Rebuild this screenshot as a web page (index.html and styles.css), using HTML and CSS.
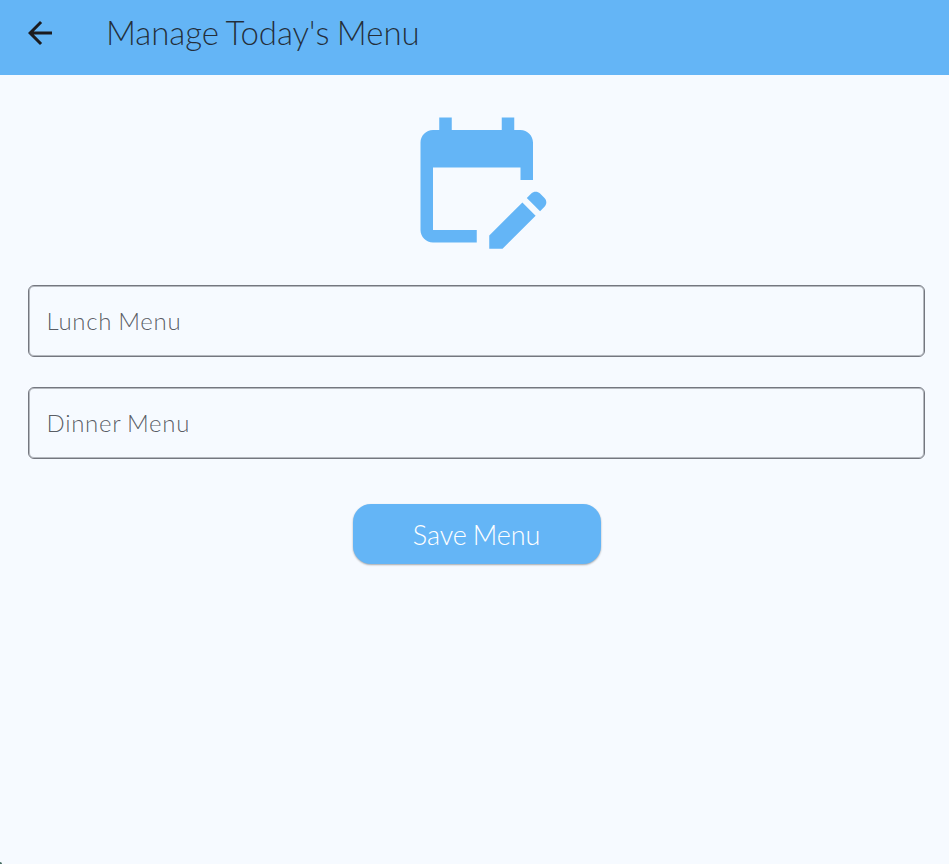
FILE: index.html
```html
<!DOCTYPE html>
<html lang="en">
<head>
<meta charset="utf-8">
<title>Manage Today's Menu</title>
<link rel="stylesheet" href="styles.css">
</head>
<body>
<header class="app-bar">
  <button class="back" aria-label="Back"><svg viewBox="4 4 16 16"><path d="M20 11H7.830l5.590-5.590L12 4l-8 8 8 8 1.410-1.410L7.830 13H20v-2z"/></svg></button>
  <h1 class="title">Manage Today's Menu</h1>
</header>
<main class="content">
  <svg class="calendar" viewBox="0.040 0 24 24"><path d="M12 22H5c-1.110 0-2-.9-2-2V6c0-1.100.890-2 2-2h1V2h2v2h8V2h2v2h1c1.100 0 2 .9 2 2v6h-2v-2H5v10h7v2zM22.130 16.990l.710-.710c.390-.390.390-1.020 0-1.410l-.710-.710c-.390-.390-1.020-.390-1.410 0l-.710.710 2.120 2.120zM21.420 17.700l-5.300 5.300H14v-2.120l5.300-5.300 2.120 2.120z"/></svg>
  <div class="field lunch">Lunch Menu</div>
  <div class="field dinner">Dinner Menu</div>
  <button class="save">Save Menu</button>
</main>
<span class="corner"></span>
</body>
</html>
```
FILE: styles.css
```css
* { box-sizing: border-box; }
body {
  margin: 0;
  min-height: 864px;
  background: #f6faff;
  font-family: Lato, sans-serif;
  font-weight: 300;
}
button { border: 0; font: inherit; }
.app-bar {
  display: flex;
  height: 75px;
  padding: 12px 27px 0 28px;
  background: #64b5f6;
}
.back {
  width: 24px;
  height: 24px;
  margin: 9px 54px 0 0;
  padding: 0;
  background: none;
}
.back svg { display: block; fill: #1b1b1f; }
.title {
  margin: 0;
  color: #1b1b1fe0;
  font-size: 33px;
  font-weight: 300;
  line-height: 41px;
  letter-spacing: -.05px;
  word-spacing: -1.400px;
}
.content {
  display: flex;
  flex-direction: column;
  padding: 30px 24px 0 28px;
}
.calendar {
  align-self: center;
  width: 150px;
  height: 150px;
  fill: #64b5f6;
}
.field {
  height: 72px;
  margin-top: 30px;
  padding: 0 17.500px;
  border: 1px solid #74777f;
  border-radius: 6px;
  box-shadow: inset 0 0 0 1px #74777f80;
  color: #44474ee0;
  font-size: 24px;
  line-height: 70px;
  letter-spacing: .7px;
  word-spacing: -1.200px;
}
.save {
  align-self: center;
  width: 248px;
  height: 60px;
  margin-top: 45px;
  padding: 0;
  border-radius: 18px;
  background: #64b5f6;
  box-shadow: 0 1px 2px #0005;
  color: #fff;
  font-size: 27px;
  letter-spacing: -.1px;
  word-spacing: -1.200px;
}
.corner {
  position: absolute;
  left: 0;
  bottom: 0;
  width: 2px;
  height: 2px;
  border-top-right-radius: 2px;
  background: #446b60;
}
```
